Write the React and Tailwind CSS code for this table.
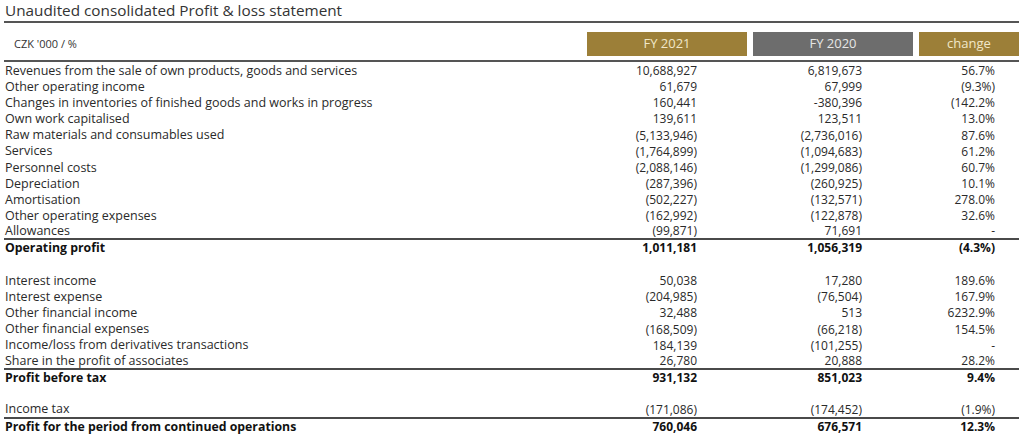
const ROWS = [
  ["Revenues from the sale of own products, goods and services", "10,688,927", "6,819,673", "56.7%"],
  ["Other operating income", "61,679", "67,999", "(9.3%)"],
  ["Changes in inventories of finished goods and works in progress", "160,441", "-380,396", "(142.2%"],
  ["Own work capitalised", "139,611", "123,511", "13.0%"],
  ["Raw materials and consumables used", "(5,133,946)", "(2,736,016)", "87.6%"],
  ["Services", "(1,764,899)", "(1,094,683)", "61.2%"],
  ["Personnel costs", "(2,088,146)", "(1,299,086)", "60.7%"],
  ["Depreciation", "(287,396)", "(260,925)", "10.1%"],
  ["Amortisation", "(502,227)", "(132,571)", "278.0%"],
  ["Other operating expenses", "(162,992)", "(122,878)", "32.6%"],
  ["Allowances", "(99,871)", "71,691", "-", "line"],
  ["Operating profit", "1,011,181", "1,056,319", "(4.3%)", "bold"],
  null,
  ["Interest income", "50,038", "17,280", "189.6%"],
  ["Interest expense", "(204,985)", "(76,504)", "167.9%"],
  ["Other financial income", "32,488", "513", "6232.9%"],
  ["Other financial expenses", "(168,509)", "(66,218)", "154.5%"],
  ["Income/loss from derivatives transactions", "184,139", "(101,255)", "-"],
  ["Share in the profit of associates", "26,780", "20,888", "28.2%", "line"],
  ["Profit before tax", "931,132", "851,023", "9.4%", "bold"],
  null,
  ["Income tax", "(171,086)", "(174,452)", "(1.9%)", "line"],
  ["Profit for the period from continued operations", "760,046", "676,571", "12.3%", "bold"],
];

function Row({ row }) {
  if (!row) return <div className="h-[16.6px]" />;
  const [label, a, b, c, kind] = row;
  const bold = kind === "bold";
  const line = kind === "line";
  return (
    <div
      className={
        "grid grid-cols-[577px_160px_160px_100px] gap-x-[6px] h-[16.14px] items-center text-[12px] leading-none " +
        (line ? "border-b-2 border-[#4a4a4a] " : "") +
        (bold ? "font-bold text-[#111]" : "text-[#2a2a2a]")
      }
    >
      <div className={"pl-[1px] whitespace-nowrap " + (bold ? "text-[12.3px]" : "text-[12.5px]")}>{label}</div>
      <div className="text-right pr-[50px]">{a}</div>
      <div className="text-right pr-[51px]">{b}</div>
      <div className="text-right pr-[24px]">{c}</div>
    </div>
  );
}

export default function App() {
  return (
    <div
      className="w-[1024px] h-[440px] bg-white overflow-hidden"
      style={{ fontFamily: "'Open Sans', 'Liberation Sans', sans-serif" }}
    >
      <div className="ml-[4px] w-[1015px]">
        <div className="h-[23px] border-b-2 border-[#555] pl-[1px] text-[15.3px] leading-[20px] text-[#333]">
          Unaudited consolidated Profit &amp; loss statement
        </div>
        <div className="grid grid-cols-[577px_160px_160px_100px] gap-x-[6px] pt-[9px] pb-[4px] border-b-2 border-[#555]">
          <div className="pl-[10px] flex items-center text-[11px] text-[#333]">CZK '000 / %</div>
          <div className="h-[24px] bg-[#9c7f38] text-[#f1e7c8] text-[13px] flex items-center justify-center">FY 2021</div>
          <div className="h-[24px] bg-[#6d6d6d] text-[#e6e6e6] text-[13px] flex items-center justify-center">FY 2020</div>
          <div className="h-[24px] bg-[#9c7f38] text-[#f1e7c8] text-[13px] flex items-center justify-center">change</div>
        </div>
        <div className="pt-[1px]">
          {ROWS.map((r, i) => (
            <Row key={i} row={r} />
          ))}
        </div>
      </div>
    </div>
  );
}
